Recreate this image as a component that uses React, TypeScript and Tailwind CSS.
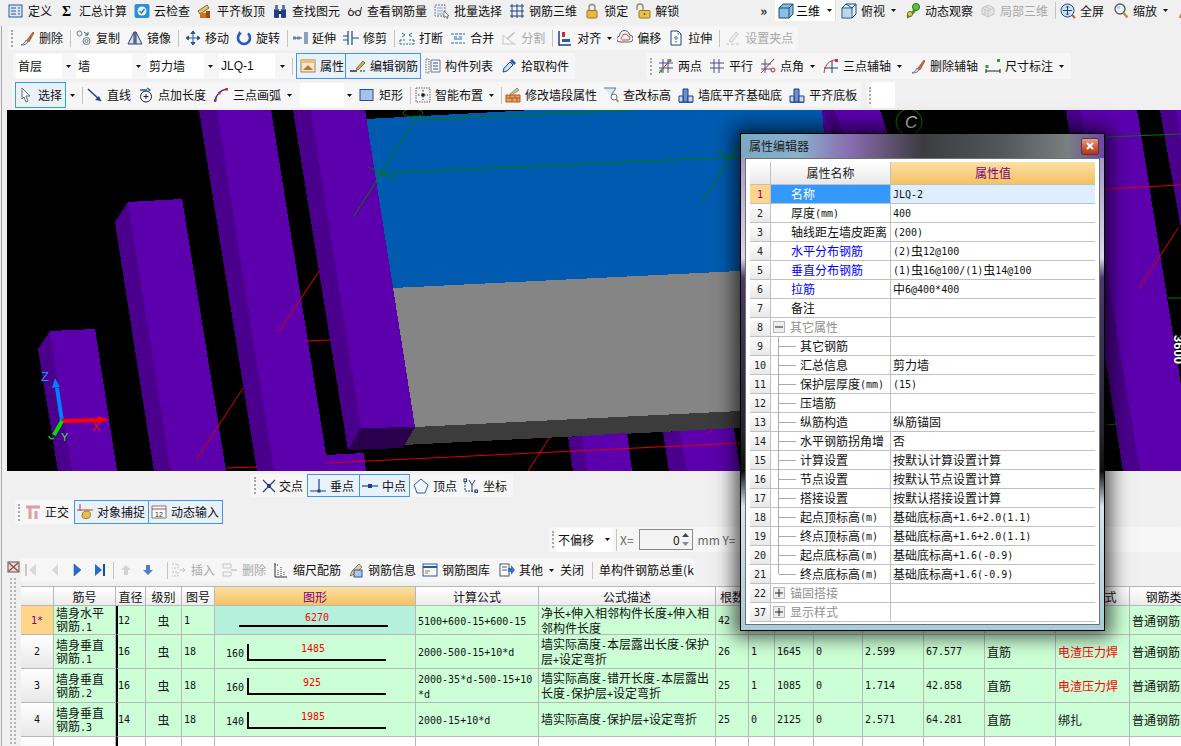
import type { ReactNode } from 'react'
import clsx from 'clsx'

const S = ({ children }: { children: ReactNode }) => (
  <svg width="16" height="16" viewBox="0 0 16 16" fill="none" className="shrink-0">
    {children}
  </svg>
)

const NAVY = '#1f3f86'

const icons: Record<string, ReactNode> = {
  define: <S><rect x="1" y="2" width="13" height="12" fill="#d8e6f4" stroke="#2a5a92" /><path d="M3 5h5M3 8h5M3 11h5M10 5h2M10 8h2M10 11h2" stroke="#2a5a92" /></S>,
  sigma: <S><text x="3" y="13" fontSize="14" fontWeight="700" fill="#000" fontFamily="Liberation Serif">Σ</text></S>,
  cloud: <S><rect x="0.5" y="1" width="15" height="14" rx="2" fill="#2a8fd8" /><circle cx="8" cy="8" r="4.5" fill="#eaf6ff" /><path d="M5.5 8l2 2 3-4" stroke="#2a6fb0" strokeWidth="1.3" /></S>,
  roof: <S><path d="M1 8l9-6 2 3-9 6z" fill="#e8c070" stroke="#8a6a30" /><rect x="3" y="10" width="10" height="5" fill="#d86a20" /><rect x="9" y="8" width="4" height="7" fill="#a04a10" /></S>,
  binoc: <S><rect x="2" y="6" width="5" height="9" rx="1" fill={NAVY} /><rect x="9" y="6" width="5" height="9" rx="1" fill={NAVY} /><rect x="3" y="2" width="3" height="5" fill="#5a78b0" /><rect x="10" y="2" width="3" height="5" fill="#5a78b0" /><rect x="7" y="8" width="2" height="3" fill="#333" /></S>,
  glasses: <S><circle cx="4" cy="10" r="2.5" stroke="#333" strokeWidth="1.2" /><circle cx="11" cy="10" r="2.5" stroke="#333" strokeWidth="1.2" /><path d="M6.5 9.5c1-.6 1.5-.6 2 0M2 8l2-3M13.5 9l1-5" stroke="#333" /></S>,
  batch: <S><rect x="1" y="2" width="10" height="11" stroke="#5a7a9a" strokeDasharray="2 1" /><path d="M3 5h6M3 8h6M3 11h6" stroke="#8aa0b8" /><path d="M10 8l5 5-2 0 1 2-1 .5-1-2-2 1z" fill="#fff" stroke="#333" strokeWidth=".6" /></S>,
  grid3d: <S><path d="M1 3h14M1 8h14M1 13h14M3 1v14M8 1v14M13 1v14" stroke={NAVY} /></S>,
  lock: <S><path d="M5 8V4.5a3 3 0 016 0V8" stroke="#8a8a70" strokeWidth="1.4" /><rect x="3" y="7.5" width="10" height="7.5" rx="1" fill="#e8b840" stroke="#9a7420" /></S>,
  unlock: <S><path d="M2 7V4a3 3 0 016 0v3" stroke="#8a8a70" strokeWidth="1.4" /><rect x="4" y="7.5" width="11" height="7.5" rx="1" fill="#e8c050" stroke="#9a7420" /><path d="M9.5 10v2M8.5 11h2" stroke="#7a5a10" /></S>,
  cube: <S><path d="M1 5l4-4h10v10l-4 4H1z" fill="#8ac0e8" stroke="#1f4a70" /><path d="M1 5h10v10M11 5l4-4" stroke="#1f4a70" /></S>,
  topview: <S><path d="M1 5l4-4h10v10l-4 4H1z" fill="#e8f2fa" stroke="#1f4a70" /><path d="M5 1l6 4h-10M11 5v10M11 5l4-4" stroke="#1f4a70" /><path d="M2 6h8v8H2z" fill="#b8d8f0" /></S>,
  orbit: <S><path d="M2 14C5 13 11 7 13 2" stroke="#3a9a30" strokeWidth="3" /><circle cx="11" cy="4" r="3.5" fill="#60c040" stroke="#2a6a20" /><circle cx="5" cy="11" r="2.5" fill="#e0d040" stroke="#6a6a20" /></S>,
  local3d: <S><path d="M2 5l6-3 6 3v6l-6 3-6-3z" fill="#e4e4e4" stroke="#c4c4c4" /><path d="M2 5l6 3 6-3M8 8v6M5 3.5l6 3M5 12.5V6.5" stroke="#c8c8c8" /></S>,
  fullscreen: <S><circle cx="7.5" cy="7.5" r="6.5" fill="#d0e2f6" stroke="#2a4a80" /><path d="M7.5 3v9M3 7.5h9M6 4.5l1.5-1.5L9 4.5M6 10.500l1.5 1.5L9 10.500" stroke={NAVY} /><path d="M12 12l3 3" stroke="#a07030" strokeWidth="2" /></S>,
  zoom: <S><circle cx="7" cy="6" r="5" fill="#f4f8fc" stroke="#506070" strokeWidth="1.4" /><path d="M10.500 10l4 4.500" stroke="#c09030" strokeWidth="2.400" /><circle cx="5.500" cy="4.500" r="1.500" fill="#b0c8e0" /></S>,
  user: <S><circle cx="8" cy="5" r="3.500" fill="#c8b070" /><path d="M2 15c0-4 3-6 6-6s6 2 6 6z" fill="#a89050" /></S>,
  brush: <S><path d="M2 15c3-1 4-3 5-5l2 2c-1 2-3 3-7 3z" fill="#d8d8e8" stroke="#4a4a70" strokeWidth=".7" /><path d="M8 10l6-8 1 1-5 9z" fill="#c86a30" stroke="#703010" strokeWidth=".5" /></S>,
  copy: <S><circle cx="3.500" cy="3.500" r="2.500" stroke="#6a7a8a" /><circle cx="10.500" cy="11" r="3.500" stroke="#6a7a8a" /><circle cx="10.500" cy="11" r="1.500" stroke="#6a7a8a" /><path d="M8 2l4 3M12 2v3H9" stroke="#3a5a8a" /></S>,
  mirror: <S><path d="M7 2L1 14h6zM9 2l6 12H9z" stroke={NAVY} fill="#d8e4f2" /><path d="M8 1v14" stroke="#333" /></S>,
  move: <S><path d="M8 1v14M1 8h14M8 1L6 3.500h4zM8 15l-2-2.500h4zM1 8l2.500-2v4zM15 8l-2.500-2v4z" stroke="#2a5a92" fill="#2a5a92" /></S>,
  rotate: <S><path d="M4 3.500a6 6 0 108 0" stroke="#2a58c0" strokeWidth="2.600" /><path d="M3 1l3 3-4 1z" fill="#2a58c0" /></S>,
  extend: <S><path d="M1 8h9M13 2v12M15 2v12" stroke="#1f4a86" /><rect x="1" y="6.500" width="3" height="3" fill="#5a80c0" /><rect x="5" y="6.500" width="3" height="3" fill="#5a80c0" /></S>,
  trim: <S><path d="M5 1v14M9 1v14" stroke="#1f4a86" strokeWidth="1.200" /><path d="M0 6h5M0 10h5M9 8h7" stroke="#1f4a86" /></S>,
  breakIco: <S><path d="M1 10h5M10 10h5M1 10v4M15 10v4M1 14h14" stroke="#2a6aa8" strokeDasharray="2 1" /><path d="M3 3l3 2-3 2M13 3l-3 2 3 2" stroke="#2a6aa8" /></S>,
  merge: <S><path d="M1 4h14M1 13h14" stroke="#2a6aa8" strokeDasharray="3 1" /><path d="M4 7h3M9 7h3M4 9h8" stroke="#2a6aa8" /></S>,
  split: <S><path d="M1 14h14M2 14V5l11 9M10 5l4-3" stroke="#c8c8c8" /><path d="M6 9l7-6" stroke="#c0c0c0" strokeWidth="1.500" /></S>,
  align: <S><path d="M2 1v14h12" stroke={NAVY} strokeWidth="1.500" /><rect x="5" y="2" width="3" height="5" fill="#c03030" /><rect x="5" y="9" width="8" height="3" fill="#2a5aa8" /></S>,
  offset: <S><path d="M3 12a3 3 0 01-.5-6 5 5 0 0110-1 3.500 3.500 0 010 7z" stroke="#50607a" fill="#f4f4f8" /><path d="M5.500 10a2 2 0 01-.3-3.500 3 3 0 015.800-.5 2 2 0 010 4z" stroke="#e04040" /></S>,
  stretch: <S><path d="M3 1h7l3 3v11H3z" stroke={NAVY} fill="#fff" /><path d="M10 1v3h3M6 8h4M8 6v7" stroke={NAVY} strokeDasharray="1.500 1" /></S>,
  grip: <S><path d="M1 14h3M6 14h3M11 14h3" stroke="#c4c4c4" /><path d="M4 11l7-9 2 2-6 8z" stroke="#c8c8c8" fill="#eee" /></S>,
  prop: <S><rect x="1" y="2" width="14" height="12" fill="#f8e8c8" stroke="#a08050" /><rect x="1" y="2" width="14" height="3" fill="#e8c078" /><path d="M3 12l5-5 5 5z" fill="#b07a30" /></S>,
  edit: <S><path d="M0 13h7" stroke="#222" strokeWidth="1.400" /><path d="M6 11l7-8 2 2-7 7z" fill="#d8a850" stroke="#704a10" strokeWidth=".7" /><path d="M10 13h5" stroke="#222" strokeDasharray="2 1" /></S>,
  list: <S><rect x="1" y="1" width="3" height="14" stroke="#6a7a8a" strokeDasharray="1.500 1" /><path d="M6 2h9v12H6z" stroke="#6a7a8a" /><path d="M8 5h5M8 8h5M8 11h5" stroke="#2a5a92" /></S>,
  pick: <S><path d="M2 14l1-4 6-6 3 3-6 6z" fill="#c8e0f4" stroke="#1f4a86" /><path d="M9 3l2-2 4 4-2 2z" fill="#2a5ab0" /></S>,
  twoPoint: <S><path d="M1 15L13 1" stroke="#c03020" /><path d="M1 5h14M1 10h14M5 1v14M10 1v14" stroke="#4a4a90" /><circle cx="12" cy="2.500" r="1.500" fill="#30a030" /><circle cx="3" cy="13" r="1.500" fill="#30a030" /></S>,
  parallel: <S><path d="M1 5h14M1 10h14M5 1v14M10 1v14" stroke="#4a4a90" /></S>,
  pointAngle: <S><path d="M1 15L14 1" stroke="#c02020" /><path d="M1 6h10M1 11h10M5 1v14" stroke="#4a4a90" /><circle cx="13" cy="12" r="2" stroke="#c02020" /></S>,
  arcAxis: <S><path d="M1 15C2 6 7 2 13 2" stroke="#d03030" /><path d="M9 3v12M1 10h14" stroke={NAVY} /><rect x="12" y="1" width="3" height="3" fill="#d03030" /></S>,
  dim: <S><path d="M1 11v4M15 11v4M1 13h14" stroke="#222" /><rect x="0.500" y="7" width="3" height="3" fill="#30a030" /><rect x="12" y="1" width="3" height="3" fill="#30a030" /></S>,
  cursor: <S><path d="M4 1l8 8-4 0 2 5-2 1-2-5-2 2z" fill="#fff" stroke="#667" /></S>,
  line: <S><path d="M1 2l13 12" stroke={NAVY} strokeWidth="1.500" /><path d="M14 14l-6-1 4-4z" fill={NAVY} /></S>,
  pointLen: <S><circle cx="8" cy="9.500" r="5.500" stroke="#222" /><path d="M8 7v5M5.500 9.500h5" stroke="#222" /><path d="M2 3h7M9 1l3 2-3 2" stroke="#2a5a92" strokeWidth="1.300" /></S>,
  arc: <S><path d="M2 15C3 7 7 3 14 2" stroke={NAVY} strokeWidth="1.500" /><rect x="1" y="12" width="2.500" height="2.500" fill="#c03030" /><rect x="12.500" y="1" width="2.500" height="2.500" fill="#c03030" /><rect x="5" y="5" width="2.500" height="2.500" fill="#c03030" /></S>,
  rect: <S><rect x="1" y="2.500" width="13" height="11" fill="#a4c4ec" stroke="#2a4a90" /></S>,
  smart: <S><rect x="1" y="1" width="14" height="14" stroke="#666" strokeDasharray="1.500 1" /><path d="M8 3v10M3 8h10" stroke="#222" strokeDasharray="1.500 1.500" /><rect x="6.500" y="6.500" width="3" height="3" fill="#222" /></S>,
  wall: <S><path d="M1 8h14v7H1z" fill="#e8a060" stroke="#b05a20" /><path d="M1 11h14M5 8v3M10 8v3M7 11v4M12 11v4" stroke="#b05a20" /><path d="M5 7l7-6 2 2-7 5z" fill="#c8c0a0" stroke="#706040" strokeWidth=".6" /></S>,
  level: <S><path d="M1 1h12l-4 6v4" stroke="#5a7a9a" fill="#dfe8f0" /><circle cx="11" cy="10" r="3" stroke="#60707a" fill="#fff" /><path d="M13 12l2.500 3" stroke="#b08a30" strokeWidth="1.800" /></S>,
  wallBase: <S><path d="M1 15h14" stroke={NAVY} strokeWidth="1.400" /><path d="M5 2h5v13H5z" fill="#6a90d0" stroke={NAVY} /><path d="M1 9h4v6H1zM10 9h5v6h-5z" fill="#c8d8f0" stroke={NAVY} /></S>,
  cross: <S><path d="M2 2l12 12M14 2L2 14" stroke={NAVY} strokeWidth="1.200" /><rect x="6.500" y="6.500" width="3" height="3" stroke={NAVY} /></S>,
  perp: <S><path d="M0 13h16M9 1v12" stroke={NAVY} strokeWidth="1.200" /><rect x="7.500" y="11.500" width="3" height="3" fill={NAVY} /></S>,
  mid: <S><path d="M0 8h16" stroke={NAVY} strokeWidth="1.200" /><rect x="6" y="6" width="4" height="4" fill={NAVY} /></S>,
  vertex: <S><path d="M8 1l7 6-3 8H4L1 7z" stroke="#2a5ab0" fill="#f4f8ff" /></S>,
  coord: <S><path d="M2 4v9h12" stroke={NAVY} strokeDasharray="2 1" /><path d="M6 2l3 5 3-5M9 7v7" stroke={NAVY} /><rect x="1" y="1" width="2.500" height="2.500" stroke={NAVY} /><rect x="12" y="12" width="2.500" height="2.500" stroke={NAVY} /></S>,
  ortho: <S><path d="M1 3h14" stroke="#d8a0a0" strokeWidth="3" /><path d="M5 3v12M11 7v8" stroke="#d8a0a0" strokeWidth="3" /></S>,
  snap: <S><path d="M0 6h16M3 0v7" stroke="#b04040" /><path d="M5 13c0-5 2-6 5-6 3 0 4 2 3 6-1 2-7 2-8 0z" fill="#e8c050" stroke="#a07820" /></S>,
  dynamic: <S><path d="M1 2h14v12H1z" stroke="#777" fill="#fff" /><path d="M1 5h14" stroke="#c04040" /><text x="4" y="13" fontSize="7" fill="#222" fontFamily="Liberation Sans">12</text></S>,
  closeBox: <S><rect x="2" y="3" width="11" height="10" fill="#e4dcdc" stroke="#555" /><path d="M3 4l9 8M12 4l-9 8" stroke="#a84040" strokeWidth="1.200" /></S>,
  first: <S><path d="M3 2v12" stroke="#c8c8c8" strokeWidth="2" /><path d="M13 2L6 8l7 6z" fill="#d8d8d8" /></S>,
  prev: <S><path d="M12 2L6 8l6 6z" fill="#d8d8d8" /></S>,
  next: <S><path d="M5 2l7 6-7 6z" fill="#2a6ac8" stroke="#1a4a90" strokeWidth=".5" /></S>,
  last: <S><path d="M3 2l7 6-7 6z" fill="#2a6ac8" /><path d="M12 2v12" stroke="#1a4a90" strokeWidth="2" /></S>,
  up: <S><path d="M8 3l5 5h-3v5H6V8H3z" fill="#d4d4d4" /></S>,
  down: <S><path d="M8 13l5-5h-3V3H6v5H3z" fill="#4a80d0" /></S>,
  insert: <S><path d="M1 2h6v4H1M1 10h6v4H1" stroke="#c0c0c0" strokeDasharray="2 1" /><path d="M8 8h6M14 8l-2-2M14 8l-2 2" stroke="#c0c0c0" /></S>,
  del: <S><path d="M1 2h8v4H1zM1 10h8v4H1z" stroke="#c4c4c4" /><path d="M9 8h6" stroke="#c4c4c4" strokeWidth="1.500" /></S>,
  scale: <S><path d="M2 1v14h12" stroke="#333" /><path d="M5 8v6M8 5v9M11 10v4M2 3h4" stroke="#333" strokeDasharray="1 1" /></S>,
  info: <S><path d="M2 14l2-5 7-7 3 3-7 7z" fill="#e8c890" stroke="#6a5020" strokeWidth=".7" /><rect x="6" y="8" width="8" height="7" fill="#a8c8e8" stroke="#2a5a92" /></S>,
  library: <S><rect x="1" y="2" width="14" height="12" fill="#f4f8fc" stroke="#2a5a92" /><path d="M1 5h14" stroke="#2a5a92" strokeWidth="2" /><path d="M3 9h5M3 11h3" stroke="#c07030" /></S>,
  other: <S><rect x="1" y="2" width="9" height="12" fill="#fff" stroke="#456" /><path d="M3 5h5M3 8h5" stroke="#456" /><path d="M9 6h3V3l4 5-4 5v-3H9z" fill="#3a70c8" /></S>,
}

const Caret = ({ className }: { className?: string }) => (
  <svg width="5" height="3" viewBox="0 0 5 3" className={clsx('shrink-0', className)}>
    <path d="M0 0h5L2.500 3z" fill="#111" />
  </svg>
)

// ascii runs go in a 6px-wide mono so they line up like the bitmap font in the app
function T({ children }: { children: string }) {
  const parts = children.split(/([\x20-\x7e]+)/).filter(Boolean)
  return (
    <>
      {parts.map((p, i) =>
        /^[\x20-\x7e]+$/.test(p) ? (
          <span key={i} className="font-['DejaVu_Sans_Mono',monospace] text-[10px]">{p}</span>
        ) : (
          <span key={i}>{p}</span>
        ),
      )}
    </>
  )
}

function Tool({ icon, label, off, caret, className }: { icon: string; label?: string; off?: boolean; caret?: boolean; className?: string }) {
  return (
    <div className={clsx('flex shrink-0 items-center gap-1 whitespace-nowrap', off ? 'text-[#a8a8a8]' : 'text-[#111]', className)}>
      {icons[icon]}
      {label && <span>{label}</span>}
      {caret && <Caret className="ml-[2px]" />}
    </div>
  )
}

function Toggle({ icon, label, className }: { icon: string; label: string; className?: string }) {
  return (
    <div className={clsx('flex h-full shrink-0 items-center gap-1 border border-[#3c9ae8] bg-[#e9f2fb] whitespace-nowrap text-[#111]', className)}>
      {icons[icon]}
      <span>{label}</span>
    </div>
  )
}

const Sep = ({ className }: { className?: string }) => <div className={clsx('h-[17px] w-px shrink-0 bg-[#c4c4c4]', className)} />
const Grip = ({ className }: { className?: string }) => <div className={clsx('h-[17px] w-0 shrink-0 border-l-2 border-dotted border-[#a8a8a8]', className)} />

function Select({ label, className }: { label?: string; className?: string }) {
  return (
    <div className={clsx('flex h-[24px] shrink-0 items-center bg-white pl-[2px] whitespace-nowrap text-[#111]', className)}>
      {label}
    </div>
  )
}

function Scene() {
  return (
    <svg viewBox="7 110 1174 361" className="block h-full w-full" shapeRendering="crispEdges">
      <rect x="7" y="110" width="1174" height="361" fill="#000" />
      {/* blue face + gray wall */}
      <polygon points="366,119 533,110 822,110 835,268 393,288" fill="#005bb0" />
      <polygon points="822,110 880,110 890,140 890,270 835,268" fill="#5c00ae" />
      <polygon points="822,110 835,110 845,140 835,140" fill="#4a008c" />
      <polygon points="393,288 760,270 760,410 415,427" fill="#858585" />
      <polygon points="415,427 760,410 760,427 403,445" fill="#3c3c3c" />
      {/* columns, left to right */}
      <polygon points="38,349 50,331 72,471 58,471" fill="#4a008c" />
      <polygon points="50,331 95,329 117,471 72,471" fill="#5c00ae" />
      <polygon points="115,222 128,202 171,471 154,471" fill="#4a008c" />
      <polygon points="128,202 182,199 226,471 171,471" fill="#5c00ae" />
      <polygon points="326,455 364,453 366,471 326,471" fill="#5c00ae" />
      <polygon points="199,110 217,110 274,471 257,471" fill="#4a008c" />
      <polygon points="217,110 271,110 326,455 326,471 274,471" fill="#5c00ae" />
      <polygon points="293,110 311,110 361,428 348,450" fill="#4a008c" />
      <polygon points="311,110 365,110 415,427 361,428" fill="#5c00ae" />
      <polygon points="361,428 415,427 403,448 348,450" fill="#2a004e" />
      <polygon points="568,437 582,436 587,471 573,471" fill="#4a008c" />
      <polygon points="582,436 627,433 632,471 587,471" fill="#5c00ae" />
      <polygon points="663,432 680,431 687,471 669,471" fill="#4a008c" />
      <polygon points="680,431 734,428 740,471 687,471" fill="#5c00ae" />
      <polygon points="1066,110 1080,110 1140,471 1123,471" fill="#4a008c" />
      <polygon points="1080,110 1137,110 1181,385 1181,471 1140,471" fill="#5c00ae" />
      <polygon points="1160,110 1181,110 1181,228" fill="#4a008c" />
      <polygon points="1176,110 1181,110 1181,140" fill="#5c00ae" />
      {/* axis lines */}
      <g stroke="#e00000" strokeWidth="1" shapeRendering="auto">
        <path d="M319 271L279 332M243 388L197 459M307 341L330 340M226 468L257 467" />
        <path d="M327 463L740 443M550 437L528 471M712 429L708 434" />
        <path d="M1106 189L1180 185M1178 228L1139 289" />
      </g>
      <g stroke="#007a00" strokeWidth="1" fill="none" shapeRendering="auto">
        <path d="M354 216L417 117M368 167L396 180M377 173L740 157M417 120L633 110" />
        <path d="M717 151L740 160M702 202L740 143M1106 137L1180 134M1168 298L1181 298M1106 425L1117 424" />
        <ellipse cx="413" cy="113" rx="10" ry="4" />
        <circle cx="909" cy="122" r="13" />
      </g>
      <text x="905" y="128" fontSize="17" fill="#c8c8c8" fontFamily="Liberation Sans" fontStyle="italic" shapeRendering="auto">C</text>
      <text x="0" y="0" fontSize="13" fontWeight="700" fill="#fff" fontFamily="Liberation Sans" transform="translate(1174 335) rotate(90)" shapeRendering="auto">3600</text>
      {/* gizmo */}
      <g shapeRendering="auto">
        <path d="M62 421L57 388" stroke="#0080ff" strokeWidth="4" />
        <path d="M52 388l3-10 5 9z" fill="#0080ff" />
        <path d="M62 421L100 420" stroke="#ff0000" strokeWidth="4" />
        <path d="M98 416l12 4-12 3z" fill="#ff0000" />
        <path d="M62 421L54 435" stroke="#00e000" strokeWidth="4" />
        <path d="M49 436a3 3 0 005 2" stroke="#00e000" strokeWidth="1.500" fill="none" />
        <text x="41" y="381" fontSize="13" fill="#2090ff" fontFamily="Liberation Sans">Z</text>
        <text x="92" y="431" fontSize="12" fill="#ff0000" fontFamily="Liberation Sans">X</text>
        <text x="61" y="441" fontSize="11" fill="#40e040" fontFamily="Liberation Sans">Y</text>
      </g>
    </svg>
  )
}

const propRows: [string, string, string, number, string?][] = [
  ['1', '名称', 'JLQ-2', 0],
  ['2', '厚度(mm)', '400', 0],
  ['3', '轴线距左墙皮距离', '(200)', 0],
  ['4', '水平分布钢筋', '(2)虫12@100', 0, 'blue'],
  ['5', '垂直分布钢筋', '(1)虫16@100/(1)虫14@100', 0, 'blue'],
  ['6', '拉筋', '中6@400*400', 0, 'blue'],
  ['7', '备注', '', 0],
  ['8', '其它属性', '', 2, 'minus'],
  ['9', '其它钢筋', '', 1],
  ['10', '汇总信息', '剪力墙', 1],
  ['11', '保护层厚度(mm)', '(15)', 1],
  ['12', '压墙筋', '', 1],
  ['13', '纵筋构造', '纵筋锚固', 1],
  ['14', '水平钢筋拐角增', '否', 1],
  ['15', '计算设置', '按默认计算设置计算', 1],
  ['16', '节点设置', '按默认节点设置计算', 1],
  ['17', '搭接设置', '按默认搭接设置计算', 1],
  ['18', '起点顶标高(m)', '基础底标高+1.6+2.0(1.1)', 1],
  ['19', '终点顶标高(m)', '基础底标高+1.6+2.0(1.1)', 1],
  ['20', '起点底标高(m)', '基础底标高+1.6(-0.9)', 1],
  ['21', '终点底标高(m)', '基础底标高+1.6(-0.9)', 1, 'end'],
  ['22', '锚固搭接', '', 2, 'plus'],
  ['37', '显示样式', '', 2, 'plus'],
]

const TreeBox = ({ plus }: { plus?: boolean }) => (
  <div className="flex h-[12px] w-[12px] shrink-0 items-center justify-center border border-[#b8b8b8] bg-[#eeeeee]">
    <svg width="8" height="8" viewBox="0 0 8 8"><path d={plus ? 'M0 4h8M4 0v8' : 'M0 4h8'} stroke="#222" /></svg>
  </div>
)

function PropertyDialog() {
  return (
    <div className="absolute top-[133px] left-[740px] flex h-[498px] w-[365px] flex-col border border-black bg-[linear-gradient(180deg,#9a8cc0_0%,#dcd8ea_25%,#4a3a70_29%,#25252c_60%,#0e0e10_68%,#d4e4ec_75%,#a8ccdc_100%)] shadow-[0_0_18px_6px_rgba(0,0,0,0.65)]">
      <div className="flex h-[24px] shrink-0 items-center justify-between bg-[linear-gradient(90deg,#7ca8c4_0%,#8ab0cc_16%,#8a6cb0_30%,#3c3c40_50%,#52585a_72%,#7a8080_90%,#6a4aa8_100%)] pr-[5px] pl-[8px]">
        <span className="text-[#1c1c1c]">属性编辑器</span>
        <div className="flex h-[17px] w-[18px] items-center justify-center rounded-[2px] border border-[#6a3030] bg-[linear-gradient(180deg,#e8a090_0%,#d06040_50%,#b03818_100%)]">
          <svg width="8" height="8" viewBox="0 0 8 8"><path d="M1 1l6 6M7 1L1 7" stroke="#fff" strokeWidth="2" /></svg>
        </div>
      </div>
      <div className="mx-[4px] h-[467px] border border-[#707070] bg-white py-[3px] pr-[4px] pl-[4px]">
        <div className="flex h-[23px] border-b border-[#c0c0c0]">
          <div className="w-[21px] shrink-0 border-r border-[#c0c0c0] bg-[linear-gradient(180deg,#fff,#e8e8e8)]" />
          <div className="flex w-[120px] shrink-0 items-center justify-center border-r border-[#c0c0c0] bg-[linear-gradient(180deg,#fff,#e8e8e8)] text-[#222]">属性名称</div>
          <div className="flex flex-1 items-center justify-center bg-[linear-gradient(180deg,#fbe0a4,#f4c262)] text-[#800080]">属性值</div>
        </div>
        {propRows.map(([no, name, value, kind, extra], i) => (
          <div key={no} className="flex h-[19px] border-b border-[#c0c0c0]">
            <div className={clsx('flex w-[21px] shrink-0 items-center justify-center border-r border-[#c0c0c0] font-["DejaVu_Sans_Mono",monospace] text-[10px]', i === 0 ? 'bg-[#ffd58a] text-[#800080]' : 'bg-[linear-gradient(180deg,#fff,#e8e8e8)] text-[#222]')}>{no}</div>
            <div className={clsx('relative flex w-[120px] shrink-0 items-center border-r border-[#c0c0c0] whitespace-nowrap', i === 0 ? 'bg-[#3399ff] text-white' : extra === 'blue' ? 'text-[#0000ff]' : kind === 2 ? 'text-[#909090]' : 'text-[#111]', kind === 1 ? 'pl-[29px]' : kind === 2 ? 'pl-[2px]' : 'pl-[20px]')}>
              {kind === 2 && <TreeBox plus={extra === 'plus'} />}
              {kind === 2 && <span className="ml-[5px]">{name}</span>}
              {kind !== 2 && <T>{name}</T>}
              {kind === 1 && (
                <>
                  <div className={clsx('absolute top-0 left-[7px] w-px bg-[#aaaaaa]', extra === 'end' ? 'h-[9px]' : 'h-[19px]')} />
                  <div className="absolute top-[9px] left-[8px] h-px w-[17px] bg-[#aaaaaa]" />
                </>
              )}
            </div>
            <div className={clsx('flex flex-1 items-center pl-[2px] whitespace-nowrap text-[#111]', i === 0 && 'bg-[#ddeeff]')}><T>{value}</T></div>
          </div>
        ))}
      </div>
    </div>
  )
}

const cols = 'grid-cols-[33px_62px_30px_36px_33px_201px_123px_177px_33px_26px_39px_49px_61px_61px_71px_74px_80px]'
// columns behind the dialog stay blank, only 搭接形式's last character shows past its edge
const headers = ['', '筋号', '直径', '级别', '图号', '图形', '计算公式', '公式描述', '根数', '', '', '', '', '', '', '搭接形式', '钢筋类型']

type Bar = {
  name: [string, string]; dia: string; grade: string; no: string; hook: string; len: string; textX: number
  formula: string[]; desc: string[]; rest: string[]; weld: string; red: boolean
}

const bars: Bar[] = [
  { name: ['墙身水平', '钢筋.1'], dia: '12', grade: '虫', no: '1', hook: '', len: '6270', textX: 102, formula: ['5100+600-15+600-15'], desc: ['净长+伸入相邻构件长度+伸入相', '邻构件长度'], rest: ['42', '', '', '', '', '', ''], weld: '', red: false },
  { name: ['墙身垂直', '钢筋.1'], dia: '16', grade: '虫', no: '18', hook: '160', len: '1485', textX: 98, formula: ['2000-500-15+10*d'], desc: ['墙实际高度-本层露出长度-保护', '层+设定弯折'], rest: ['26', '1', '1645', '0', '2.599', '67.577', '直筋'], weld: '电渣压力焊', red: true },
  { name: ['墙身垂直', '钢筋.2'], dia: '16', grade: '虫', no: '18', hook: '160', len: '925', textX: 97, formula: ['2000-35*d-500-15+10', '*d'], desc: ['墙实际高度-错开长度-本层露出', '长度-保护层+设定弯折'], rest: ['25', '1', '1085', '0', '1.714', '42.858', '直筋'], weld: '电渣压力焊', red: true },
  { name: ['墙身垂直', '钢筋.3'], dia: '14', grade: '虫', no: '18', hook: '140', len: '1985', textX: 98, formula: ['2000-15+10*d'], desc: ['墙实际高度-保护层+设定弯折'], rest: ['25', '0', '2125', '0', '2.571', '64.281', '直筋'], weld: '绑扎', red: false },
]

const cell = 'flex items-center overflow-hidden border-r border-b border-[#b8b8b8] whitespace-nowrap text-[#111]'

function RebarShape({ bar, first }: { bar: Bar; first: boolean }) {
  const h = first ? 29 : 34
  const y = first ? 20 : 24
  return (
    <svg width="200" height={h} className="block">
      {bar.hook && <text x="11" y="22" fontSize="10" fill="#111" fontFamily="DejaVu Sans Mono">{bar.hook}</text>}
      {bar.hook && <path d={`M33 9V${y + 1}H171`} stroke="#000" strokeWidth="2" fill="none" />}
      {!bar.hook && <path d={`M24 ${y}H173`} stroke="#000" strokeWidth="2" />}
      <text x={bar.textX} y={first ? 15 : 17} textAnchor="middle" fontSize="10" fill="#ff0000" fontFamily="DejaVu Sans Mono">{bar.len}</text>
    </svg>
  )
}

function RebarTable() {
  return (
    <div className={clsx('grid grid-rows-[19px_29px_34px_34px_34px_34px] border-t border-[#b8b8b8] leading-[13px]', cols)}>
      {headers.map((h, i) => (
        <div key={i} className={clsx(cell, 'justify-center', i === 5 ? 'bg-[linear-gradient(180deg,#fbe0a4,#f4c262)] text-[#800080]' : 'bg-[linear-gradient(180deg,#fff,#ececec)]')}>{h}</div>
      ))}
      {bars.map((b, r) => (
        <div key={r} className="contents">
          <div className={clsx(cell, 'justify-center font-["DejaVu_Sans_Mono",monospace] text-[10px]', r === 0 ? 'bg-[#ffd58a] text-[#800080]' : 'bg-[linear-gradient(180deg,#fff,#e8e8e8)]')}>{r + 1}{r === 0 && '*'}</div>
          <div className={clsx(cell, 'flex-col !items-start justify-center bg-[#ccffd6] pl-[2px]')}>
            <div>{b.name[0]}</div>
            <div><T>{b.name[1]}</T></div>
          </div>
          <div className={clsx(cell, 'border-l-2 border-l-black bg-[#ccffd6]')}><T>{b.dia}</T></div>
          <div className={clsx(cell, 'justify-center bg-[#ccffd6]')}>{b.grade}</div>
          <div className={clsx(cell, 'bg-[#ccffd6] pl-[2px]')}><T>{b.no}</T></div>
          <div className={clsx(cell, r === 0 ? 'bg-[#b4f0dc]' : 'bg-[#ccffd6]')}><RebarShape bar={b} first={r === 0} /></div>
          <div className={clsx(cell, 'flex-col !items-start justify-center bg-[#ccffd6] pl-[2px]')}>
            {b.formula.map((f) => <div key={f}><T>{f}</T></div>)}
          </div>
          <div className={clsx(cell, 'flex-col !items-start justify-center bg-[#ccffd6] pl-[2px]')}>
            {b.desc.map((d) => <div key={d}><T>{d}</T></div>)}
          </div>
          {b.rest.map((v, i) => (
            <div key={i} className={clsx(cell, 'bg-[#ccffd6] pl-[2px]')}><T>{v}</T></div>
          ))}
          <div className={clsx(cell, 'bg-[#ccffd6] pl-[2px]', b.red && 'text-[#ff0000]')}>{b.weld}</div>
          <div className={clsx(cell, 'bg-[#ccffd6] pl-[2px]')}>普通钢筋</div>
        </div>
      ))}
      <div className={clsx(cell, 'justify-center bg-[linear-gradient(180deg,#fff,#e8e8e8)] font-["DejaVu_Sans_Mono",monospace] text-[10px]')}>5</div>
      <div className={clsx(cell, 'bg-white')} />
      <div className={clsx(cell, 'border-l-2 border-l-black bg-white')} />
      {headers.slice(3).map((_, i) => <div key={i} className={clsx(cell, 'bg-white')} />)}
    </div>
  )
}

export default function App() {
  return (
    <div className="relative h-[746px] w-[1181px] overflow-hidden bg-[#f0f0f0] font-['Noto_Sans_CJK_SC','Liberation_Sans',sans-serif] text-[12px]">
      {/* main menu row */}
      <div className="flex h-[21px] items-center gap-[7px] pl-[8px]">
        <Tool icon="define" label="定义" />
        <Tool icon="sigma" label="汇总计算" />
        <Tool icon="cloud" label="云检查" />
        <Tool icon="roof" label="平齐板顶" />
        <Tool icon="binoc" label="查找图元" />
        <Tool icon="glasses" label="查看钢筋量" />
        <Tool icon="batch" label="批量选择" />
        <Tool icon="grid3d" label="钢筋三维" />
        <Tool icon="lock" label="锁定" />
        <Tool icon="unlock" label="解锁" />
        <span className="ml-[74px] text-[13px] font-bold text-[#222]">»</span>
        <div className="ml-[1px] flex h-[21px] w-[61px] shrink-0 items-center gap-[2px] border-r border-[#e0e0e0] bg-white pl-[3px]">
          {icons.cube}
          <span>三维</span>
          <Caret className="ml-[5px]" />
        </div>
        <Tool icon="topview" label="俯视" caret className="-ml-[2px]" />
        <Tool icon="orbit" label="动态观察" className="ml-[2px]" />
        <Tool icon="local3d" label="局部三维" off />
        <Sep />
        <Tool icon="fullscreen" label="全屏" className="-ml-[3px]" />
        <Tool icon="zoom" label="缩放" caret className="ml-[2px]" />
        <Tool icon="user" className="ml-[2px]" />
      </div>

      <div className="ml-px border-l border-[#a8a8a8]">
        {/* edit row */}
        <div className="mt-[5px] ml-[6px] flex h-[24px] w-[790px] items-center gap-[7px] rounded-[2px] bg-[#f6f6f6] pl-[3px]">
          <Grip className="mr-[-1px]" />
          <Tool icon="brush" label="删除" />
          <Sep className="-mr-[2px]" />
          <Tool icon="copy" label="复制" />
          <Tool icon="mirror" label="镜像" />
          <Sep className="-mr-[1px]" />
          <Tool icon="move" label="移动" />
          <Tool icon="rotate" label="旋转" />
          <Sep className="-mr-[3px]" />
          <Tool icon="extend" label="延伸" />
          <Tool icon="trim" label="修剪" />
          <Sep className="-mr-[3px]" />
          <Tool icon="breakIco" label="打断" />
          <Tool icon="merge" label="合并" />
          <Tool icon="split" label="分割" off />
          <Sep />
          <Tool icon="align" label="对齐" caret className="-ml-[3px]" />
          <Tool icon="offset" label="偏移" className="-ml-[2px]" />
          <Tool icon="stretch" label="拉伸" />
          <Sep className="-mr-[2px]" />
          <Tool icon="grip" label="设置夹点" off />
        </div>

        {/* component row */}
        <div className="mt-[3px] flex h-[26px] items-center">
          <div className="ml-[11px] flex h-full w-[562px] items-center rounded-[2px] bg-[#f6f6f6] pl-[3px]">
            <Select label="首层" className="w-[46px]" />
            <Caret className="mx-[4px]" />
            <Select label="墙" className="ml-[1px] w-[56px]" />
            <Caret className="mx-[4px]" />
            <Select label="剪力墙" className="ml-[2px] w-[57px]" />
            <Caret className="mx-[4px]" />
            <Select label="JLQ-1" className="ml-[2px] w-[56px] font-['Liberation_Sans',sans-serif]" />
            <Caret className="mx-[5px]" />
            <Sep className="ml-[2px]" />
            <Toggle icon="prop" label="属性" className="ml-[3px] h-[24px] w-[50px] pl-[3px]" />
            <Toggle icon="edit" label="编辑钢筋" className="-ml-px h-[24px] w-[76px] pl-[4px]" />
            <Tool icon="list" label="构件列表" className="ml-[4px]" />
            <Tool icon="pick" label="拾取构件" className="ml-[8px]" />
          </div>
          <div className="ml-[71px] flex h-full w-[425px] items-center gap-[7px] rounded-[2px] bg-[#f6f6f6] pl-[4px]">
            <Grip className="-mr-[1px]" />
            <Tool icon="twoPoint" label="两点" />
            <Tool icon="parallel" label="平行" />
            <Tool icon="pointAngle" label="点角" caret />
            <Tool icon="arcAxis" label="三点辅轴" caret className="ml-[1px]" />
            <Tool icon="brush" label="删除辅轴" className="ml-[1px]" />
            <Tool icon="dim" label="尺寸标注" caret />
          </div>
        </div>

        {/* draw row */}
        <div className="mt-[3px] flex h-[26px] items-center">
          <div className="ml-[10px] flex h-full w-[849px] items-center gap-[7px] rounded-[2px] bg-[#f6f6f6] pl-[3px]">
            <Toggle icon="cursor" label="选择" className="h-[24px] w-[51px] pl-[2px]" />
            <Caret className="-ml-[3px]" />
            <Sep className="-mr-[3px]" />
            <Tool icon="line" label="直线" />
            <Tool icon="pointLen" label="点加长度" />
            <Tool icon="arc" label="三点画弧" caret />
            <Select className="ml-[1px] w-[44px]" />
            <Caret className="-ml-[4px]" />
            <Tool icon="rect" label="矩形" />
            <Sep className="-mr-[3px]" />
            <Tool icon="smart" label="智能布置" caret />
            <Sep className="-mr-[4px]" />
            <Tool icon="wall" label="修改墙段属性" />
            <Tool icon="level" label="查改标高" className="-ml-[1px]" />
            <Tool icon="wallBase" label="墙底平齐基础底" />
            <Tool icon="wallBase" label="平齐底板" />
          </div>
          <div className="ml-[6px] flex h-full w-[28px] items-center rounded-[2px] bg-[#f6f6f6] pl-[2px]">
            <Grip />
            <div className="ml-[1px] h-full w-[24px] bg-white" />
          </div>
        </div>

        {/* 3d view */}
        <div className="mt-[2px] ml-[5px] h-[361px]">
          <Scene />
        </div>

        {/* snap modes */}
        <div className="mt-[3px] ml-[248px] flex h-[23px] w-[263px] items-center rounded-[2px] bg-[#f6f6f6] pl-[4px]">
          <Grip />
          <Tool icon="cross" label="交点" className="ml-[5px] gap-[2px]" />
          <Toggle icon="perp" label="垂点" className="ml-[4px] w-[53px] pl-[2px]" />
          <Toggle icon="mid" label="中点" className="-ml-px w-[51px] pl-[2px]" />
          <Tool icon="vertex" label="顶点" className="ml-[3px]" />
          <Tool icon="coord" label="坐标" className="ml-[6px]" />
        </div>

        {/* ortho row */}
        <div className="mt-[3px] ml-[13px] flex h-[24px] w-[208px] items-center rounded-[2px] bg-[#f6f6f6] pl-[3px]">
          <Grip />
          <Tool icon="ortho" label="正交" className="ml-[5px]" />
          <Toggle icon="snap" label="对象捕捉" className="ml-[5px] w-[75px] pl-[2px]" />
          <Toggle icon="dynamic" label="动态输入" className="-ml-px w-[75px] pl-[2px]" />
        </div>

        {/* offset row */}
        <div className="mt-[3px] ml-[547px] flex h-[25px] items-center rounded-[2px] bg-[#f6f6f6] pl-[3px] text-[#111]">
          <Grip />
          <Select label="不偏移" className="ml-[2px] w-[57px]" />
          <Caret className="ml-[-8px]" />
          <div className="ml-[6px] h-[22px] w-px bg-[#c4c4c4]" />
          <span className="ml-[3px] text-[#666]">X=</span>
          <div className="ml-[5px] flex h-[21px] w-[54px] items-center border border-[#8a8a8a] bg-[#f4f4f4]">
            <span className="w-[40px] text-right">0</span>
            <div className="ml-auto flex h-full w-[12px] flex-col items-center justify-around">
              <svg width="7" height="4"><path d="M0 4h7L3.500 0z" fill="#444" /></svg>
              <svg width="7" height="4"><path d="M0 0h7L3.500 4z" fill="#888" /></svg>
            </div>
          </div>
          <span className="ml-[5px] text-[#666]">mm Y=</span>
        </div>

        {/* rebar editor */}
        <div className="mt-[6px] flex">
          <div className="flex w-[19px] shrink-0 flex-col pt-[1px] pl-[4px]">
            {icons.closeBox}
            <div className="mt-[2px] ml-[3px] h-[180px] w-[8px] bg-[radial-gradient(#b4b4b4_1px,transparent_1px)] bg-[length:4px_4px]" />
          </div>
          <div className="min-w-0 flex-1">
            <div className="flex h-[24px] w-[674px] items-center rounded-[2px] bg-[#f6f6f6] pl-[1px]">
              <Tool icon="first" className="ml-[1px]" />
              <Tool icon="prev" className="ml-[7px]" />
              <Tool icon="next" className="ml-[7px]" />
              <Tool icon="last" className="ml-[7px]" />
              <Sep className="ml-[5px]" />
              <Tool icon="up" className="ml-[4px]" />
              <Tool icon="down" className="ml-[6px]" />
              <Sep className="ml-[11px]" />
              <Tool icon="insert" label="插入" off className="ml-[3px]" />
              <Tool icon="del" label="删除" off className="ml-[7px]" />
              <Tool icon="scale" label="缩尺配筋" className="ml-[7px]" />
              <Tool icon="info" label="钢筋信息" className="ml-[7px]" />
              <Tool icon="library" label="钢筋图库" className="ml-[6px]" />
              <Tool icon="other" label="其他" caret className="ml-[9px]" />
              <span className="ml-[6px] whitespace-nowrap text-[#111]">关闭</span>
              <Sep className="ml-[8px]" />
              <span className="ml-[6px] whitespace-nowrap text-[#111]">单构件钢筋总重(k</span>
            </div>
            <div className="mt-[4px]">
              <RebarTable />
            </div>
          </div>
        </div>
      </div>

      <PropertyDialog />
    </div>
  )
}
